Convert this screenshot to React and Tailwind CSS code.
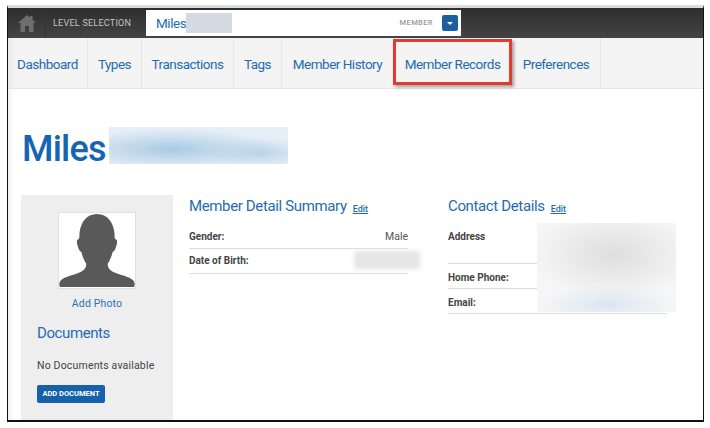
import React from 'react';

const navItems = [
  { label: 'Dashboard', width: 'w-[80px]' },
  { label: 'Types', width: 'w-[54px]' },
  { label: 'Transactions', width: 'w-[92px]' },
  { label: 'Tags', width: 'w-[48px]' },
  { label: 'Member History', width: 'w-[112px]' },
  { label: 'Member Records', width: 'w-[118px]' },
  { label: 'Preferences', width: 'w-[89px]' },
];

const NavTab = ({ label, width }) => (
  <div className={`${width} flex items-center justify-center border-r border-[#e6e6e6] pt-[2px] text-[13.5px] tracking-[-0.5px] text-[#1f6cb0]`}>
    {label}
  </div>
);

const HomeIcon = () => (
  <svg width="18" height="17" viewBox="0 0 18 17" fill="#6e6e6e">
    <path d="M9 0 L12 2.6 V1 H14.5 V4.8 L18 8 H15.5 V17 H11 V11 H7 V17 H2.5 V8 H0 Z" />
  </svg>
);

const Silhouette = () => (
  <svg width="78" height="76" viewBox="0 0 78 76" fill="#595959">
    <path d="M39 1 C50 1 56 10 57 21 C57 24 57 26 58 27 C60 27 60 30 59 33 C58 37 57 39 55 40 C54 45 52 49 50 52 C50 56 52 59 57 61 C64 64 72 65 76 69 C78 71 78 74 77 76 H1 C0 74 0 71 2 69 C6 65 14 64 21 61 C26 59 28 56 28 52 C26 49 24 45 23 40 C21 39 20 37 19 33 C18 30 18 27 20 27 C21 26 21 24 21 21 C22 10 28 1 39 1 Z" />
  </svg>
);

const DetailRow = ({ label, value, className = '' }) => (
  <div className={`flex justify-between border-b border-[#dcdcdc] text-[10px] text-[#444] ${className}`}>
    <span className="font-bold">{label}</span>
    {value && <span className="text-[10.5px] text-[#555]">{value}</span>}
  </div>
);

const SectionTitle = ({ children }) => (
  <div className="flex h-[20px] items-end">
    <span className="text-[15px] leading-[20px] tracking-[-0.36px] text-[#1f6cb0]">{children}</span>
    <span className="ml-[6px] text-[9px] font-medium text-[#1f6cb0] underline">Edit</span>
  </div>
);

export default function App() {
  return (
    <div className="h-[428px] w-[710px] overflow-hidden bg-white pl-[7px] pt-[5px] font-['Roboto',sans-serif]">
      <div className="h-[417px] w-[697px] overflow-hidden border-x border-b-2 border-x-[#111] border-b-[#111] border-t-[3px] border-t-[#dcdcdc]">
        {/* Level selection bar */}
        <div className="flex h-[30px] items-center bg-[#3c3c3c] bg-gradient-to-b from-[#2e2e2e] to-[#444]">
          <div className="flex h-full w-[38px] items-center justify-center border-r border-[#333]">
            <HomeIcon />
          </div>
          <span className="ml-[7px] w-[93px] pt-[1px] text-[9px] tracking-[0.25px] text-[#c4c4c4]">LEVEL SELECTION</span>
          <div className="flex h-[26px] w-[315px] items-center bg-white pl-[10px]">
            <span className="text-[13.5px] tracking-[-0.45px] text-[#1f6cb0]">Miles</span>
            <div className="h-[20px] w-[46px] bg-[#d3dae2]" />
            <span className="ml-auto text-[7.5px] font-medium tracking-[0.4px] text-[#9a9a9a]">MEMBER</span>
            <div className="ml-[9px] mr-[3px] flex h-[16px] w-[16px] items-center justify-center rounded-[2px] bg-[#1c5f9f]">
              <div className="h-0 w-0 border-x-[3px] border-t-[3px] border-x-transparent border-t-white" />
            </div>
          </div>
        </div>

        {/* Nav tabs */}
        <div className="relative flex h-[51px] border-b border-[#e6e6e6] bg-[#f4f4f4] shadow-[inset_8px_0_6px_-6px_#e4e4e4]">
          {navItems.map((item) => (
            <NavTab key={item.label} label={item.label} width={item.width} />
          ))}
          <div className="absolute left-[385px] top-[1px] h-[46px] w-[119px] border-[3px] border-[#e23c30] shadow-[2px_2px_3px_rgba(0,0,0,0.35)]" />
        </div>

        {/* Page body */}
        <div className="pl-[13px] shadow-[inset_8px_0_6px_-6px_#ececec]">
          <div className="flex h-[106px] items-start pt-[38px]">
            <h1 className="ml-[1px] text-[36px] font-medium leading-[44px] tracking-[-0.8px] text-[#1565b0]">Miles</h1>
            <div className="ml-[3px] h-[37px] w-[179px] bg-[#e6eff7] bg-[radial-gradient(ellipse_60%_55%_at_35%_60%,#a9cae3,transparent),radial-gradient(ellipse_30%_40%_at_85%_70%,#bdd6ea,transparent)]" />
          </div>

          <div className="flex items-start">
            {/* Photo + documents panel */}
            <div className="flex h-[225px] w-[152px] flex-col bg-[#eeeeee] px-[16px]">
              <div className="mx-auto mt-[17px] flex h-[77px] w-[78px] items-end justify-center border border-[#e0e0e0] bg-white">
                <Silhouette />
              </div>
              <div className="mt-[7px] text-center text-[10.5px] tracking-[0.15px] text-[#2a72b5]">Add Photo</div>
              <div className="mt-[10px] text-[15px] tracking-[-0.4px] text-[#1f6cb0]">Documents</div>
              <div className="mt-[14px] text-[10.5px] tracking-[0.18px] text-[#444]">No Documents available</div>
              <div className="mt-[11px] flex h-[18px] w-[68px] items-center justify-center rounded-[2px] bg-[#1561aa] text-[7.5px] font-bold text-white">
                ADD DOCUMENT
              </div>
            </div>

            {/* Member detail summary */}
            <div className="relative ml-[16px] w-[219px] pt-[1px]">
              <SectionTitle>Member Detail Summary</SectionTitle>
              <DetailRow label="Gender:" value="Male" className="mt-[13px] h-[20px]" />
              <DetailRow label="Date of Birth:" className="h-[25px] pt-[4px]" />
              <div className="absolute left-[165px] top-[56px] h-[18px] w-[66px] bg-[#e6e6e6] blur-[2px]" />
            </div>

            {/* Contact details */}
            <div className="relative ml-[40px] w-[219px] pt-[1px]">
              <SectionTitle>Contact Details</SectionTitle>
              <DetailRow label="Address" className="mt-[13px] h-[35px] w-[89px]" />
              <DetailRow label="Home Phone:" className="h-[25px] w-[89px] pt-[6px]" />
              <DetailRow label="Email:" className="h-[25px] pt-[6px]" />
              <div className="absolute left-[89px] top-[28px] h-[89px] w-[139px] bg-[#f6f6f6] bg-[radial-gradient(ellipse_60%_50%_at_55%_35%,#dedede,transparent),radial-gradient(ellipse_50%_22%_at_50%_92%,#dbe6f1,transparent)]" />
            </div>
          </div>
        </div>
      </div>
    </div>
  );
}
